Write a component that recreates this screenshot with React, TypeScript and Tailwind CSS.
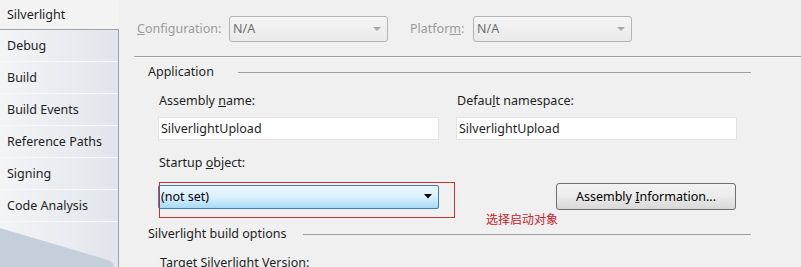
import React from "react";

const font = { fontFamily: '"Noto Sans", "Noto Sans CJK SC", sans-serif' };

function NASelect() {
  return (
    <div className="w-[159px] h-[26px] rounded-[3px] border border-[#b3b3b3] bg-gradient-to-b from-[#f4f4f4] to-[#eaeaea] flex items-center justify-between pl-[3px] pr-[6px]">
      <span className="text-[#6e6e6e]">N/A</span>
      <svg width="8" height="5" viewBox="0 0 8 5"><path d="M0 0 L8 0 L4 4 Z" fill="#a8a8a8" /></svg>
    </div>
  );
}

function GroupHeader({ label, gap }: { label: string; gap: string }) {
  return (
    <div className="flex items-center h-[16px] ml-[29px] mr-[50px]">
      <span className="text-[#1e1e1e] whitespace-nowrap">{label}</span>
      <div className={`flex-1 h-px bg-[#a0a0a0] ${gap}`} />
    </div>
  );
}

export default function App() {
  const items = ["Debug", "Build", "Build Events", "Reference Paths", "Signing", "Code Analysis"];
  return (
    <div className="w-[801px] h-[267px] overflow-hidden bg-[#f0f0f0] flex text-[12.5px] leading-[16px] text-[#1e1e1e]" style={font}>
      {/* sidebar */}
      <div className="w-[119px] flex flex-col shrink-0">
        <div className="h-[29px] shrink-0 flex items-center pl-[7px] bg-[#f3f3f3]">Silverlight</div>
        <div className="flex-1 min-h-0 overflow-hidden border-t border-r border-[#9ea4ad] bg-gradient-to-r from-[#f3f4f6] to-[#e1e5eb] flex flex-col">
          {items.map((it) => (
            <div key={it} className="h-[32px] flex items-center pl-[7px] border-b border-[#f6f7f9] shrink-0">{it}</div>
          ))}
          <svg width="118" height="45" viewBox="0 0 118 45" className="shrink-0">
            <path d="M0 6 L108 38 Q114 40 114 46 L114 50 L0 50 Z" fill="#c5cedb" />
          </svg>
        </div>
      </div>

      {/* main */}
      <div className="flex-1 min-w-0 overflow-hidden">
        <div className="mt-[16px] ml-[18px] h-[26px] flex items-center">
          <span className="w-[92px] text-[#9b9b9b]"><span className="underline">C</span>onfiguration:</span>
          <NASelect />
          <span className="ml-[22px] w-[63px] text-[#9b9b9b]">Platfor<span className="underline">m</span>:</span>
          <NASelect />
        </div>
        <div className="mt-[14px] ml-[15px] h-px bg-[#a0a0a0]" />
        <div className="ml-[15px] h-px bg-[#fafafa]" />
        <div className="mt-[6px]">
          <GroupHeader label="Application" gap="ml-[24px]" />
        </div>

        <div className="ml-[39px] mt-[13px] flex gap-[17px]">
          <div className="w-[281px] flex flex-col">
            <div className="h-[16px] pl-px">Assembly <span className="underline">n</span>ame:</div>
            <div className="mt-[8px] h-[23px] bg-white border border-[#e2e3e5] flex items-center pl-[2px]">SilverlightUpload</div>
          </div>
          <div className="w-[281px] flex flex-col">
            <div className="h-[16px] pl-px">Defau<span className="underline">l</span>t namespace:</div>
            <div className="mt-[8px] h-[23px] bg-white border border-[#e2e3e5] flex items-center pl-[2px]">SilverlightUpload</div>
          </div>
        </div>

        <div className="ml-[40px] mt-[15px] h-[16px]">Startup <span className="underline">o</span>bject:</div>

        <div className="ml-[39px] mt-[12px] flex gap-[17px] items-center h-[27px]">
          <div className="w-[281px] relative">
            <div className="h-[24px] rounded-[2px] border border-[#3c7fb1] bg-gradient-to-b from-[#eaf6fd] via-[#d9f0fc] to-[#a7d9f5] flex items-center justify-between pl-[2px] pr-[6px] text-black">
              <span>(not set)</span>
              <svg width="8" height="5" viewBox="0 0 8 5"><path d="M0 0 L8 0 L4 4.5 Z" fill="#000" /></svg>
            </div>
            <div className="absolute left-[1px] top-[-3px] w-[296px] h-[36px] border border-[#c8323a]" />
          </div>
          <div className="w-[281px] flex justify-end pr-px">
            <div className="w-[180px] h-[27px] rounded-[3px] border border-[#707070] bg-gradient-to-b from-[#f2f2f2] via-[#ebebeb] to-[#d8d8d8] flex items-center justify-center text-black">
              Assembly&nbsp;<span className="underline">I</span>nformation...
            </div>
          </div>
        </div>

        <div className="mt-[4px] h-[12px] leading-[12px] pl-[367px] text-[12px] text-[#c8202a] whitespace-nowrap">选择启动对象</div>

        <GroupHeader label="Silverlight build options" gap="ml-[16px]" />

        <div className="ml-[41px] mt-[13px] h-[16px] whitespace-nowrap">Target Silverlight Version:</div>
      </div>
    </div>
  );
}
